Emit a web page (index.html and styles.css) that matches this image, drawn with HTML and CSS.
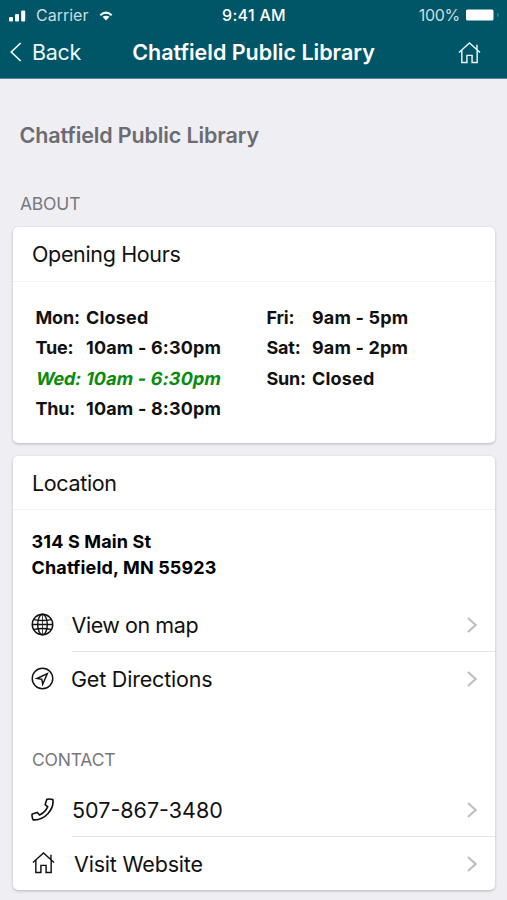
FILE: index.html
```html
<!DOCTYPE html>
<html lang="en">
<head>
<meta charset="utf-8">
<title>Chatfield Public Library</title>
<link rel="stylesheet" href="styles.css">
</head>
<body>
<svg class="defs" aria-hidden="true">
  <symbol id="house" viewBox="0 0 24 24"><path d="M1 12 12 2l11 10M19.800 4v5M4 10V22.500h5.300V15h5.400v7.500H20V10"/></symbol>
  <symbol id="chevron" viewBox="0 0 10 16"><path d="M1 1l7.600 7L1 15"/></symbol>
</svg>
<header class="top">
  <div class="status">
    <div class="side">
      <svg class="signal" viewBox="0 0 17 12"><rect x="0" y="7" width="4" height="4.500" rx="1"/><rect x="6" y="4" width="4" height="7.500" rx="1"/><rect x="12.200" y="0.500" width="4" height="11" rx="1"/></svg>
      <span class="carrier">Carrier</span>
      <svg class="wifi" viewBox="0 0 14 10"><path class="arc" d="M1.300 4.200Q7-1 12.700 4.200"/><path d="M3.500 5.800Q7 3.600 10.500 5.800L7 9.500Z"/></svg>
    </div>
    <span class="time">9:41 AM</span>
    <div class="side end">
      <span class="percent">100%</span>
      <svg class="battery" viewBox="0 0 33 12"><rect x="0" y="0.500" width="27.500" height="11" rx="1.500"/><rect class="cap" x="31" y="4" width="1.500" height="4" rx="0.700"/></svg>
    </div>
  </div>
  <nav class="nav">
    <a class="back"><svg viewBox="0 0 12 20"><path d="M10.700 1 1.300 10l9.400 9"/></svg><span>Back</span></a>
    <h1>Chatfield Public Library</h1>
    <svg class="home"><use href="#house"/></svg>
  </nav>
</header>
<main>
  <h2>Chatfield Public Library</h2>
  <h3 class="about">ABOUT</h3>
  <section class="card">
    <h4 class="opening"><span>Opening Hours</span></h4>
    <div class="hours">
      <dl>
        <dt>Mon:</dt><dd>Closed</dd>
        <dt>Tue:</dt><dd>10am - 6:30pm</dd>
        <dt class="today">Wed:</dt><dd class="today">10am - 6:30pm</dd>
        <dt>Thu:</dt><dd>10am - 8:30pm</dd>
      </dl>
      <dl>
        <dt>Fri:</dt><dd>9am - 5pm</dd>
        <dt>Sat:</dt><dd>9am - 2pm</dd>
        <dt>Sun:</dt><dd>Closed</dd>
      </dl>
    </div>
  </section>
  <section class="card location">
    <h4><span>Location</span></h4>
    <address>314 S Main St<br>Chatfield, MN 55923</address>
    <a class="row">
      <svg class="icon" viewBox="0 0 24 24"><circle cx="12" cy="12" r="10.700"/><ellipse cx="12" cy="12" rx="5" ry="10.700"/><path d="M1.300 12h21.400M3.200 6.900q8.800 2 17.600 0M3.200 17.100q8.800-2 17.600 0"/><path class="thin" d="M12 1.300v21.400"/></svg>
      <span class="label map">View on map</span><svg class="chev"><use href="#chevron"/></svg>
    </a>
    <a class="row last">
      <svg class="icon" viewBox="0 0 24 24"><circle cx="12" cy="12" r="10.700"/><path d="M17 7 6.300 12l5 .800.900 5.300Z"/></svg>
      <span class="label directions">Get Directions</span><svg class="chev"><use href="#chevron"/></svg>
    </a>
    <h3 class="contact">CONTACT</h3>
    <a class="row">
      <svg class="icon call" viewBox="0 0 24 24"><path d="M16.500 1.400Q19.800.600 22.800 1.700C23.600 7 21.500 12 17.800 16.200 13.500 20.800 8 23.300 2.300 22.800 1.200 20.800.800 18.800 1.200 16.800L6.600 15 9 17.700C12.600 16 15.800 12.700 17.400 9.200L14.800 6.800Z"/></svg>
      <span class="label phone">507-867-3480</span><svg class="chev"><use href="#chevron"/></svg>
    </a>
    <a class="row last web">
      <svg class="icon"><use href="#house"/></svg>
      <span class="label website">Visit Website</span><svg class="chev"><use href="#chevron"/></svg>
    </a>
  </section>
</main>
</body>
</html>
```
FILE: styles.css
```css
* { box-sizing: border-box; }
body { margin: 0; height: 900px; overflow: hidden; background: #eeeef3; font-family: Inter, Roboto, sans-serif; color: #111; }
h1, h2, h3, h4, dl, dd { margin: 0; }
svg { flex: none; fill: none; stroke: currentColor; }
.defs { display: none; }

.top { height: 79px; background: #005567; border-bottom: 1px solid #4f8999; color: #fff; }
.status { height: 30px; display: grid; grid-template-columns: 1fr auto 1fr; align-items: center; padding: 0 8px 0 9px; font-size: 16px; }
.side { display: flex; align-items: center; color: #c9dde1; }
.end { justify-content: flex-end; }
.status svg { fill: #fff; stroke: none; }
.signal { width: 17px; height: 12px; margin: 2px 10px 0 0; }
.carrier { width: 63px; }
.wifi { width: 14px; height: 10px; margin-top: 2px; }
.status .arc { fill: none; stroke: #fff; stroke-width: 2; }
.time { font-weight: 500; letter-spacing: 0.3px; }
.percent { margin-right: 6px; letter-spacing: -0.3px; }
.battery { width: 33px; height: 12px; }
.status .cap { fill: #3c7a88; }

.nav { height: 44px; display: grid; grid-template-columns: 123px 1fr 123px; align-items: center; }
.back { display: flex; align-items: center; padding-left: 10px; font-size: 21.500px; letter-spacing: -0.3px; color: #e8f7fa; }
.back svg { width: 12px; height: 20px; margin-right: 10px; stroke-width: 1.700; }
h1 { font-size: 21.500px; font-weight: 600; text-align: center; white-space: nowrap; letter-spacing: 0; }
.home { width: 23px; height: 23px; justify-self: end; margin-right: 26px; stroke-width: 1.500; color: #e8f7fa; }

main { padding: 0 12px 0 13px; }
h2 { margin: 41px 0 0 6.500px; height: 30px; line-height: 30px; font-size: 21.500px; font-weight: 600; color: #6b6b71; letter-spacing: -0.130px; white-space: nowrap; }
h3 { font-size: 17.500px; font-weight: 400; color: #77777d; letter-spacing: -0.2px; line-height: 24px; }
.about { margin: 42px 0 11px 7px; }

.card { background: #fff; border-radius: 5px; box-shadow: 0 1px 3px rgba(0, 0, 0, .24); height: 216px; margin-bottom: 13px; }
.location { height: 434px; }
h4 { height: 55px; line-height: 55px; padding-left: 19px; border-bottom: 1px solid #f3f3f4; font-size: 21.500px; font-weight: 400; letter-spacing: -0.350px; }
.location h4 { height: 54px; }

.hours { display: grid; grid-template-columns: 231px 1fr; padding: 20.500px 0 0 23px; align-items: start; }
dl { display: grid; grid-template-columns: 50px 1fr; grid-auto-rows: 30.600px; line-height: 30.600px; font-size: 18px; font-weight: 650; white-space: nowrap; letter-spacing: 0.170px; }
dl + dl { grid-template-columns: 45px 1fr; }
dt { letter-spacing: -0.200px; margin-left: -0.500px; }
.today { color: #098b0d; transform: skewX(-11deg); font-style: normal; }

address { padding: 19px 0 0 18.500px; height: 88px; font-size: 18px; font-weight: 650; font-style: normal; line-height: 26px; color: #000; letter-spacing: 0.150px; }
.row { display: flex; align-items: center; height: 54px; padding: 0 18px 0 18px; background: linear-gradient(#e5e5e8, #e5e5e8) 59px 100% / 100% 1px no-repeat; }
.last { background: none; }
.icon { width: 23px; height: 23px; margin: -2px 18px 0 0; stroke-width: 1.500; }
.thin { stroke-width: 0.800; }
.call { stroke-width: 1.700; }
.label { flex: 1; font-size: 21.500px; white-space: nowrap; }
.map { letter-spacing: -0.450px; margin-left: -0.500px; }
.directions { letter-spacing: -0.200px; margin-left: -1px; }
.website { letter-spacing: -0.200px; }
.chev { width: 10px; height: 16px; margin-top: -1px; stroke-width: 2.100; color: #bfbfc2; }
.contact { margin: 42px 0 11px 19px; }
.web .icon { margin: -3px 19px 0 1px; }
```
